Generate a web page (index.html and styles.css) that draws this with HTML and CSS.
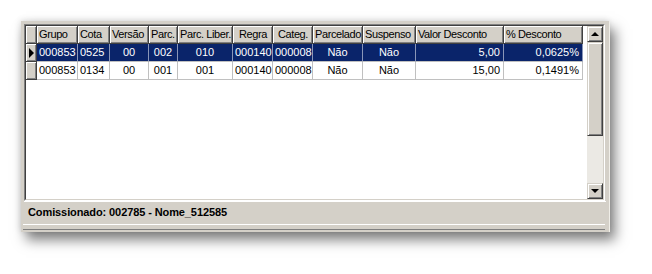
FILE: index.html
```html
<!DOCTYPE html>
<html>
<head>
<meta charset="utf-8">
<link rel="stylesheet" href="styles.css">
</head>
<body>
<div class="window">
  <div class="grid-box">
    <div class="grid-area">
      <div class="grid">
        <div class="row head">
          <div class="cell ind"></div>
          <div class="cell w1">Grupo</div>
          <div class="cell w2">Cota</div>
          <div class="cell w3">Versão</div>
          <div class="cell w4">Parc.</div>
          <div class="cell w5">Parc. Liber.</div>
          <div class="cell w6 c">Regra</div>
          <div class="cell w7 c">Categ.</div>
          <div class="cell w8">Parcelado</div>
          <div class="cell w9">Suspenso</div>
          <div class="cell w10">Valor Desconto</div>
          <div class="cell w11">% Desconto</div>
        </div>
        <div class="row sel">
          <div class="cell ind"><span class="arrow"></span></div>
          <div class="cell w1">000853</div>
          <div class="cell w2">0525</div>
          <div class="cell w3 c">00</div>
          <div class="cell w4 c">002</div>
          <div class="cell w5 c">010</div>
          <div class="cell w6">000140</div>
          <div class="cell w7">000008</div>
          <div class="cell w8 c">Não</div>
          <div class="cell w9 c">Não</div>
          <div class="cell w10 r">5,00</div>
          <div class="cell w11 r">0,0625%</div>
        </div>
        <div class="row">
          <div class="cell ind"></div>
          <div class="cell w1">000853</div>
          <div class="cell w2">0134</div>
          <div class="cell w3 c">00</div>
          <div class="cell w4 c">001</div>
          <div class="cell w5 c">001</div>
          <div class="cell w6">000140</div>
          <div class="cell w7">000008</div>
          <div class="cell w8 c">Não</div>
          <div class="cell w9 c">Não</div>
          <div class="cell w10 r">15,00</div>
          <div class="cell w11 r">0,1491%</div>
        </div>
      </div>
      <div class="vscroll">
        <div class="sbtn"><span class="tri up"></span></div>
        <div class="thumb"></div>
        <div class="track"></div>
        <div class="sbtn"><span class="tri down"></span></div>
      </div>
    </div>
  </div>
  <div class="status">Comissionado: 002785 - Nome_512585</div>
  <div class="bottom-bar"></div>
</div>
</body>
</html>
```

FILE: styles.css
```css
html, body {
  margin: 0;
  padding: 0;
  background: #ffffff;
}
body {
  width: 652px;
  height: 274px;
  overflow: hidden;
  padding: 21px 0 0 21px;
  box-sizing: border-box;
  font-family: "Liberation Sans", Arial, sans-serif;
}
.window {
  width: 589px;
  height: 211px;
  background: #d4d0c8;
  box-sizing: border-box;
  padding: 3px 4px 0 3px;
  display: flex;
  flex-direction: column;
  box-shadow: 5px 8px 12px rgba(0,0,0,0.5), -1px -1px 6px rgba(0,0,0,0.12);
  border-right: 1px solid #f0eee8;
}
.grid-box {
  height: 177px;
  flex: none;
  border-top: 1px solid #808080;
  border-left: 1px solid #808080;
  border-right: 1px solid #ffffff;
  border-bottom: 1px solid #ffffff;
  box-sizing: border-box;
}
.grid-area {
  height: 100%;
  border-top: 1px solid #404040;
  border-left: 1px solid #404040;
  border-right: 1px solid #d4d0c8;
  border-bottom: 1px solid #d4d0c8;
  box-sizing: border-box;
  background: #ffffff;
  display: flex;
  justify-content: space-between;
}
.grid {
  display: flex;
  flex-direction: column;
  width: 557px;
  font-size: 11px;
}
.row {
  display: flex;
  height: 18px;
}
.cell {
  flex: none;
  height: 18px;
  box-sizing: border-box;
  padding: 0 2px;
  white-space: nowrap;
  overflow: hidden;
  line-height: 17px;
  color: #000;
  border-right: 1px solid #c0c0c0;
  border-bottom: 1px solid #c0c0c0;
  text-align: left;
}
.cell.c { text-align: center; }
.cell.r { text-align: right; padding-right: 3px; }
.ind { width: 11px; }
.w1 { width: 41px; }
.w2 { width: 32px; }
.w3 { width: 39px; }
.w4 { width: 29px; }
.w5 { width: 55px; }
.w6 { width: 40px; }
.w7 { width: 40px; }
.w8 { width: 50px; }
.w9 { width: 53px; }
.w10 { width: 88px; }
.w11 { width: 79px; }
.head .cell,
.cell.ind {
  background: #d4d0c8;
  border-right: 1px solid #404040;
  border-bottom: 1px solid #404040;
  box-shadow: inset 1px 1px 0 #ffffff, inset -1px -1px 0 #808080;
}
.head .cell {
  letter-spacing: -0.4px;
  padding-left: 2px;
  padding-right: 1px;
}
.cell.ind {
  padding: 0;
  position: relative;
}
.row.sel .cell {
  background: #0a246a;
  color: #ffffff;
  border-right-color: #8a96b8;
}
.row.sel .cell.ind {
  background: #d4d0c8;
  border-right-color: #404040;
}
.arrow {
  position: absolute;
  left: 3px;
  top: 4px;
  width: 0;
  height: 0;
  border-top: 5px solid transparent;
  border-bottom: 5px solid transparent;
  border-left: 5px solid #000;
}
.vscroll {
  width: 16px;
  display: flex;
  flex-direction: column;
  background: #ebe9e4;
}
.sbtn, .thumb {
  flex: none;
  background: #d4d0c8;
  box-sizing: border-box;
  border-top: 1px solid #d4d0c8;
  border-left: 1px solid #d4d0c8;
  border-right: 1px solid #404040;
  border-bottom: 1px solid #404040;
  box-shadow: inset 1px 1px 0 #ffffff, inset -1px -1px 0 #808080;
}
.sbtn {
  height: 16px;
  display: flex;
  align-items: center;
  justify-content: center;
}
.thumb { height: 94px; }
.track { flex: 1; }
.tri {
  width: 0;
  height: 0;
  border-left: 4px solid transparent;
  border-right: 4px solid transparent;
}
.tri.up { border-bottom: 4px solid #000; margin-top: -1px; }
.tri.down { border-top: 4px solid #000; }
.status {
  height: 22px;
  flex: none;
  border-top: 1px solid #ffffff;
  box-sizing: border-box;
  font-size: 11px;
  font-weight: bold;
  letter-spacing: -0.1px;
  color: #000;
  line-height: 20px;
  padding-left: 4px;
  margin-right: -1px;
}
.bottom-bar {
  height: 6px;
  flex: none;
  box-sizing: border-box;
  border-top: 1px solid #ffffff;
  border-bottom: 1px solid #808080;
  margin-top: 1px;
  margin-left: -1px;
}
```
